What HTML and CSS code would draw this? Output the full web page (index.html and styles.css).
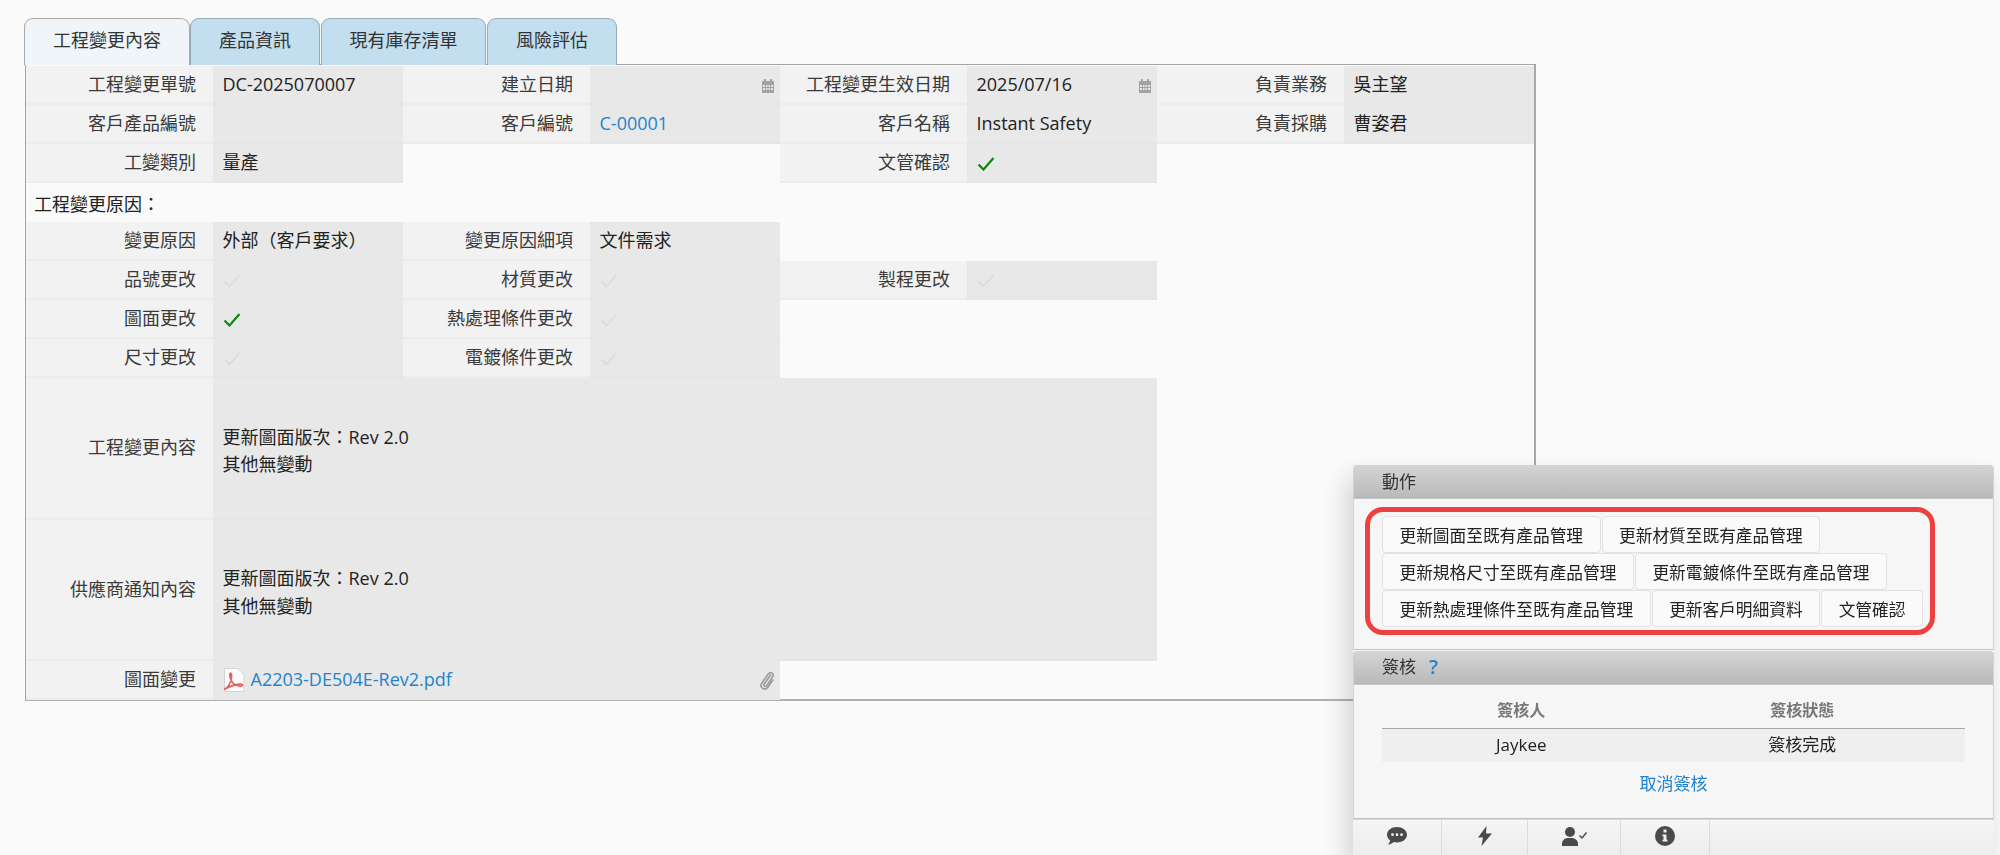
FILE: index.html
```html
<!DOCTYPE html>
<html lang="zh-Hant">
<head>
<meta charset="utf-8">
<title>工程變更</title>
<link rel="stylesheet" href="styles.css">
</head>
<body>
<main class="page">
  <nav class="tabs">
    <a class="tab active">工程變更內容</a>
    <a class="tab w130">產品資訊</a>
    <a class="tab w166">現有庫存清單</a>
    <a class="tab w130">風險評估</a>
  </nav>
  <section class="sheet">
    <div class="grid">
      <div class="l">工程變更單號</div><div class="v">DC-2025070007</div>
      <div class="l">建立日期</div><div class="v has-icon"><svg class="cal" viewBox="0 0 12 14"><path d="M2 0h2v2H2zM8 0h2v2H8z"/><path fill-rule="evenodd" d="M0 2h12v12H0zM1 6v2h2V6zm3 0v2h1.500V6zm2.500 0v2H8V6zM9 6v2h2V6zM1 9v2h2V9zm3 0v2h1.500V9zm2.500 0v2H8V9zM9 9v2h2V9z"/></svg></div>
      <div class="l">工程變更生效日期</div><div class="v has-icon">2025/07/16<svg class="cal" viewBox="0 0 12 14"><path d="M2 0h2v2H2zM8 0h2v2H8z"/><path fill-rule="evenodd" d="M0 2h12v12H0zM1 6v2h2V6zm3 0v2h1.500V6zm2.500 0v2H8V6zM9 6v2h2V6zM1 9v2h2V9zm3 0v2h1.500V9zm2.500 0v2H8V9zM9 9v2h2V9z"/></svg></div>
      <div class="l">負責業務</div><div class="v">吳主望</div>

      <div class="l">客戶產品編號</div><div class="v"></div>
      <div class="l">客戶編號</div><div class="v"><a class="link">C-00001</a></div>
      <div class="l">客戶名稱</div><div class="v">Instant Safety</div>
      <div class="l">負責採購</div><div class="v">曹姿君</div>

      <div class="l">工變類別</div><div class="v">量產</div>
      <div class="skip2"></div>
      <div class="l">文管確認</div><div class="v"><svg class="chk on" viewBox="0 0 18 14"><path d="M1.500 7.500 6.500 12.500 16.500 1"/></svg></div>
      <div class="skip2"></div>

      <div class="section">工程變更原因：</div>

      <div class="l">變更原因</div><div class="v">外部（客戶要求）</div>
      <div class="l">變更原因細項</div><div class="v">文件需求</div>
      <div class="skip4"></div>

      <div class="l">品號更改</div><div class="v"><svg class="chk" viewBox="0 0 18 14"><path d="M1.500 7.500 6.500 12.500 16.500 1"/></svg></div>
      <div class="l">材質更改</div><div class="v"><svg class="chk" viewBox="0 0 18 14"><path d="M1.500 7.500 6.500 12.500 16.500 1"/></svg></div>
      <div class="l">製程更改</div><div class="v"><svg class="chk" viewBox="0 0 18 14"><path d="M1.500 7.500 6.500 12.500 16.500 1"/></svg></div>
      <div class="skip2"></div>

      <div class="l">圖面更改</div><div class="v"><svg class="chk on" viewBox="0 0 18 14"><path d="M1.500 7.500 6.500 12.500 16.500 1"/></svg></div>
      <div class="l">熱處理條件更改</div><div class="v"><svg class="chk" viewBox="0 0 18 14"><path d="M1.500 7.500 6.500 12.500 16.500 1"/></svg></div>
      <div class="skip4"></div>

      <div class="l">尺寸更改</div><div class="v"><svg class="chk" viewBox="0 0 18 14"><path d="M1.500 7.500 6.500 12.500 16.500 1"/></svg></div>
      <div class="l">電鍍條件更改</div><div class="v"><svg class="chk" viewBox="0 0 18 14"><path d="M1.500 7.500 6.500 12.500 16.500 1"/></svg></div>
      <div class="skip4"></div>

      <div class="l">工程變更內容</div>
      <div class="v span5"><div class="note">更新圖面版次：Rev 2.0<br>其他無變動</div></div>
      <div class="skip2"></div>

      <div class="l">供應商通知內容</div>
      <div class="v span5"><div class="note">更新圖面版次：Rev 2.0<br>其他無變動</div></div>
      <div class="skip2"></div>

      <div class="l">圖面變更</div>
      <div class="v span3 has-icon">
        <svg class="pdf" viewBox="0 0 22 24"><path d="M1.500 .5H15l6 6V23.500H1.500z" fill="#fbfbfb" stroke="#d4d4d4"/><path d="M1 21.500c4-1.500 7-7 7.500-12 .2-2.500-.2-4.500-.9-4.500-.9 0-.9 2.500-.3 5 .9 3.500 3.500 6.500 6.700 7.500 2 .6 5 .8 5.500-.2.400-.9-1.800-1.500-5-1-3.500.5-8 2-13.500 5.200z" fill="none" stroke="#e8605c" stroke-width="1.700"/></svg>
        <a class="link">A2203-DE504E-Rev2.pdf</a>
        <svg class="clip" viewBox="0 0 16 20"><path d="M11.500 5 5.200 14c-1.100 1.600 1.200 3.300 2.400 1.700l6-8.800c2-3-2.200-5.900-4.300-3L2.800 13.200c-2.800 4.200 3 8.200 6 4l5-7.200" fill="none" stroke="#999" stroke-width="1.600" stroke-linecap="round"/></svg>
      </div>
    </div>
  </section>
</main>

<aside class="side">
  <section class="panel">
    <header class="panel-head">動作</header>
    <div class="actions">
      <div class="btn-row"><button class="btn">更新圖面至既有產品管理</button><button class="btn">更新材質至既有產品管理</button></div>
      <div class="btn-row"><button class="btn">更新規格尺寸至既有產品管理</button><button class="btn">更新電鍍條件至既有產品管理</button></div>
      <div class="btn-row"><button class="btn">更新熱處理條件至既有產品管理</button><button class="btn">更新客戶明細資料</button><button class="btn">文管確認</button></div>
      <div class="highlight"></div>
    </div>
  </section>
  <section class="panel sign">
    <header class="panel-head">簽核<span class="help">?</span></header>
    <div class="sign-body">
      <div class="sign-row th"><span>簽核人</span><span>簽核狀態</span></div>
      <div class="sign-row td"><span>Jaykee</span><span>簽核完成</span></div>
      <a class="link cancel">取消簽核</a>
    </div>
  </section>
  <footer class="dock">
    <div class="dock-btn d1"><svg viewBox="0 0 20 18"><path fill-rule="evenodd" d="M10 0c5.500 0 10 3.400 10 7.700s-4.500 7.700-10 7.700c-1.200 0-2.300-.2-3.300-.4C5 16.500 2.800 17.700.8 17.500c1.200-1 2.100-2.400 2.300-4.200C1.200 11.900 0 9.900 0 7.700 0 3.400 4.500 0 10 0zM5.500 6.300a1.400 1.400 0 1 0 0 2.800 1.400 1.400 0 0 0 0-2.800zm4.500 0a1.400 1.400 0 1 0 0 2.800 1.400 1.400 0 0 0 0-2.800zm4.500 0a1.400 1.400 0 1 0 0 2.800 1.400 1.400 0 0 0 0-2.800z"/></svg></div>
    <div class="dock-btn d2"><svg viewBox="0 0 14 20"><path d="M8.500 0 0 11.500h5L3.500 20 14 7.500H8z"/></svg></div>
    <div class="dock-btn d3"><svg viewBox="0 0 26 19"><circle cx="8" cy="5" r="5"/><path d="M0 19v-2.500C0 13.500 3 11 6 11h4c3 0 6 2.500 6 5.500V19z"/><path d="M17.500 8.500 20 11l4.500-5.500" fill="none" stroke="currentColor" stroke-width="1.500"/></svg></div>
    <div class="dock-btn d4"><svg viewBox="0 0 20 20"><path fill-rule="evenodd" d="M10 0a10 10 0 1 1 0 20 10 10 0 0 1 0-20zM8.500 3.500v3h3v-3zM7.500 8.500v1.800h1v3.400h-1v1.800h5v-1.800h-1V8.500z"/></svg></div>
    <div class="dock-rest"></div>
  </footer>
</aside>
</body>
</html>
```

FILE: styles.css
```css
* { box-sizing: border-box; }
html, body { margin: 0; height: 100%; }
body {
  background: #fafafa;
  color: #222;
  font: 18px/1.3 "Open Sans", "Noto Sans CJK TC", sans-serif;
  overflow: hidden;
}
.page { padding: 18px 0 0 25px; width: 1536px; }

/* tabs */
.tabs { display: flex; height: 47px; position: relative; z-index: 1; margin-left: -1px; }
.tab {
  width: 130px;
  margin-right: 1px;
  display: flex;
  align-items: center;
  justify-content: center;
  padding-bottom: 3px;
  background: #c3deef;
  border: 1px solid #97aab8;
  border-bottom: 0;
  border-radius: 9px 9px 0 0;
  color: #333;
}
.tab.active { width: 166px; background: #f0f5f9; border-color: #a8a8a8; margin-right: 0; }
.tab.w130 { width: 130px; }
.tab.w166 { width: 165px; }

/* main sheet */
.sheet {
  height: 637px;
  border: 1px solid #a4a4a4;
  border-width: 1px 2px 2px 1px;
  border-color: #a4a4a4 #a8a8a8 #b0b0b0 #a4a4a4;
  margin-top: -1px;
}
.grid {
  display: grid;
  grid-template-columns: repeat(4, 187px 190px);
  grid-template-rows: repeat(8, 39px) 142px 141px 39px;
  padding-top: 1px;
}
.l, .v {
  display: flex;
  align-items: center;
  border-bottom: 2px solid #ececec;
}
.l { background: #f2f2f2; justify-content: flex-end; padding: 0 17px 0 0; color: #3a3a3a; }
.v { background: #e8e8e8; padding-left: 9.500px; color: #222; border-bottom-color: #e6e6e6; }
.has-icon { position: relative; }
.skip2 { grid-column: span 2; }
.skip4 { grid-column: span 4; }
.span5 { grid-column: span 5; }
.span3 { grid-column: span 3; }
.section { grid-column: 1 / -1; display: flex; align-items: center; padding-left: 8px; padding-top: 4px; color: #222; }
.link { color: #1f83cf; text-decoration: none; }
.note { line-height: 27.500px; padding-top: 6px; }

.cal { position: absolute; right: 6px; top: 13px; width: 12px; height: 14px; fill: #a3a3a3; }
.chk { width: 18px; height: 14px; fill: none; stroke: #dcdcdc; stroke-width: 1.800; margin-top: 2px; }
.chk.on { stroke: #0b8a0b; stroke-width: 2.200; }
.pdf { width: 22px; height: 24px; margin-right: 6px; flex: none; }
.clip { position: absolute; right: 5px; top: 9px; width: 16px; height: 20px; }

/* side panels */
.side {
  position: fixed;
  left: 1353px;
  top: 465px;
  width: 641px;
  height: 390px;
  display: flex;
  flex-direction: column;
  box-shadow: -6px 12px 24px rgba(0, 0, 0, .16);
  background: #f6f6f6;
}
.panel { border: 1px solid #d2d2d2; border-bottom-color: #bfbfbf; border-radius: 4px 4px 0 0; background: #f6f6f6; }
.panel-head {
  height: 33px;
  display: flex;
  align-items: center;
  padding: 0 28px;
  font-size: 17px;
  color: #333;
  background: linear-gradient(#d4d4d4, #b9b9b9);
  border-bottom: 1px solid #c4c4c4;
}
.sign .panel-head { padding-bottom: 2px; }
.help { color: #1f83cf; margin-left: 13px; font-size: 20px; font-weight: 600; }
.actions { position: relative; height: 150px; padding: 17px 0 0 28px; }
.btn-row { display: flex; gap: 1px; height: 37px; }
.btn {
  height: 37px;
  padding: 0 16.500px;
  font: 16.700px "Open Sans", "Noto Sans CJK TC", sans-serif;
  color: #222;
  background: #fafafa;
  border: 1px solid #e2e2e2;
  border-radius: 4px;
}
.highlight {
  position: absolute;
  left: 11px;
  top: 8px;
  width: 570px;
  height: 128px;
  border: 5px solid #ef4040;
  border-radius: 18px;
}
.sign { margin-top: 1px; }
.sign-body { height: 133px; padding: 0 28px; display: flex; flex-direction: column; font-size: 17px; }
.sign-row { display: grid; grid-template-columns: 1fr 1fr; width: 583px; text-align: center; align-items: center; }
.sign-row span:first-child { padding-right: 13px; }
.sign-row span:last-child { padding-right: 34px; }
.th { height: 44px; font-size: 16px; font-weight: 700; color: #777; border-bottom: 1px solid #a8a8a8; padding-top: 8px; }
.td { height: 33px; background: #efefef; }
.cancel { align-self: center; margin: 11px 0 0; }
.dock { display: flex; height: 37px; background: linear-gradient(#f5f5f5, #ededed); border-top: 1px solid #d8d8d8; }
.dock-btn {
  display: flex;
  align-items: center;
  justify-content: center;
  height: 100%;
  color: #4a4a4a;
  border-right: 1px solid #dcdcdc;
  padding-bottom: 3px;
}
.dock-btn svg { fill: currentColor; }
.d1 { width: 89px; } .d1 svg { width: 20px; height: 18px; }
.d2 { width: 86px; } .d2 svg { width: 14px; height: 20px; }
.d3 { width: 93px; padding-left: 2px; } .d3 svg { width: 26px; height: 19px; }
.d4 { width: 89px; } .d4 svg { width: 20px; height: 20px; }
.dock-rest { flex: 1; }
```
